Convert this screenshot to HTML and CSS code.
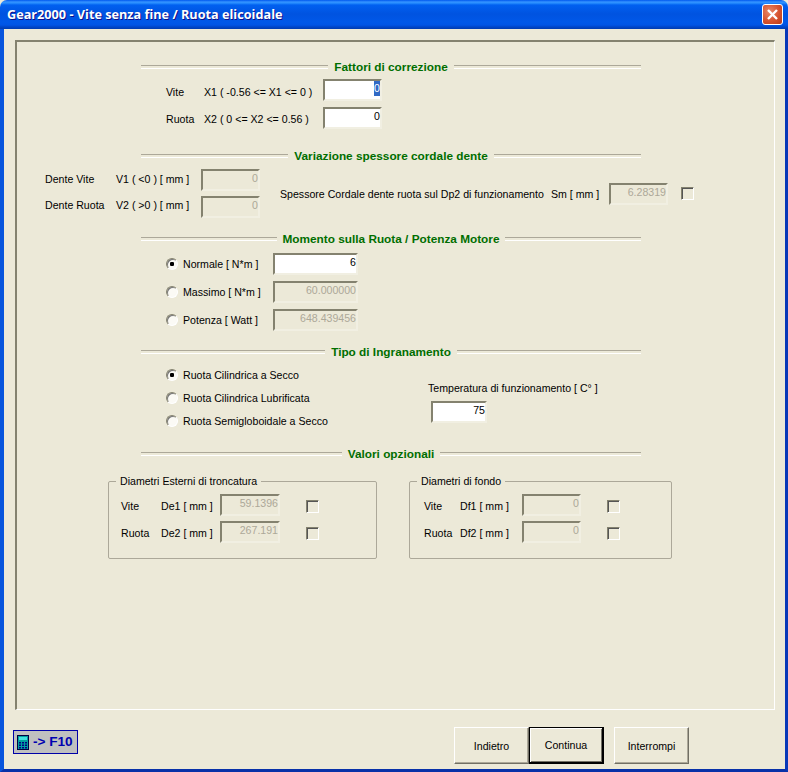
FILE: index.html
```html
<!DOCTYPE html>
<html lang="it">
<head>
<meta charset="utf-8">
<title>Gear2000</title>
<link rel="stylesheet" href="styles.css">
</head>
<body>
<div class="window">
  <header class="titlebar">
    <span class="title">Gear2000 - Vite senza fine / Ruota elicoidale</span>
    <span class="close"><svg width="13" height="13" viewBox="0 0 13 13"><path d="M2 2 L11 11 M11 2 L2 11" stroke="#fff" stroke-width="2.4" fill="none"/></svg></span>
  </header>
  <div class="client">
    <main class="panel">
      <div class="heading"><span>Fattori di correzione</span></div>
      <div class="factor-rows">
        <div class="factor"><span>Vite</span><span>X1 ( -0.56 &lt;= X1 &lt;= 0 )</span><div class="field on"><span class="selected">0</span></div></div>
        <div class="factor"><span>Ruota</span><span>X2 ( 0 &lt;= X2 &lt;= 0.56 )</span><div class="field on">0</div></div>
      </div>

      <div class="heading after-factors"><span>Variazione spessore cordale dente</span></div>
      <div class="thickness">
        <div class="thickness-rows">
          <div class="tooth"><span>Dente Vite</span><span>V1 ( &lt;0 ) [ mm ]</span><div class="field">0</div></div>
          <div class="tooth"><span>Dente Ruota</span><span>V2 ( &gt;0 ) [ mm ]</span><div class="field">0</div></div>
        </div>
        <div class="chordal"><span>Spessore Cordale dente ruota sul Dp2 di funzionamento</span><span>Sm [ mm ]</span><div class="field">6.28319</div><i class="check"></i></div>
      </div>

      <div class="heading after-thickness"><span>Momento sulla Ruota / Potenza Motore</span></div>
      <div class="moment-rows">
        <div class="moment"><i class="radio sel"></i><span>Normale [ N*m ]</span><div class="field on">6</div></div>
        <div class="moment"><i class="radio"></i><span>Massimo [ N*m ]</span><div class="field">60.000000</div></div>
        <div class="moment"><i class="radio"></i><span>Potenza [ Watt ]</span><div class="field">648.439456</div></div>
      </div>

      <div class="heading after-moment"><span>Tipo di Ingranamento</span></div>
      <div class="mesh">
        <div class="mesh-rows">
          <div class="mesh-row"><i class="radio sel"></i><span>Ruota Cilindrica a Secco</span></div>
          <div class="mesh-row"><i class="radio"></i><span>Ruota Cilindrica Lubrificata</span></div>
          <div class="mesh-row"><i class="radio"></i><span>Ruota Semigloboidale a Secco</span></div>
        </div>
        <div class="temperature"><span>Temperatura di funzionamento [ C° ]</span><div class="field on">75</div></div>
      </div>

      <div class="heading after-mesh"><span>Valori opzionali</span></div>
      <div class="groups">
        <fieldset class="group ext">
          <legend>Diametri Esterni di troncatura</legend>
          <div class="diam"><span>Vite</span><span>De1 [ mm ]</span><div class="field">59.1396</div><i class="check"></i></div>
          <div class="diam"><span>Ruota</span><span>De2 [ mm ]</span><div class="field">267.191</div><i class="check"></i></div>
        </fieldset>
        <fieldset class="group root">
          <legend>Diametri di fondo</legend>
          <div class="diam"><span>Vite</span><span>Df1 [ mm ]</span><div class="field">0</div><i class="check"></i></div>
          <div class="diam"><span>Ruota</span><span>Df2 [ mm ]</span><div class="field">0</div><i class="check"></i></div>
        </fieldset>
      </div>
    </main>
    <footer class="footer">
      <div class="f10">
        <svg width="12" height="15" viewBox="0 0 12 15"><rect x="0.5" y="0.5" width="11" height="14" fill="#00a0a0" stroke="#000040"/><rect x="2" y="2" width="8" height="3" fill="#40e0e0"/><path d="M2 7h2v1.500H2zM5 7h2v1.500H5zM8 7h2v1.500H8zM2 9.500h2V11H2zM5 9.500h2V11H5zM8 9.500h2V11H8zM2 12h2v1.500H2zM5 12h2v1.500H5zM8 12h2v1.500H8z" fill="#000080"/></svg>
        <span>-&gt; F10</span>
      </div>
      <button class="btn back">Indietro</button>
      <button class="btn default">Continua</button>
      <button class="btn abort">Interrompi</button>
    </footer>
  </div>
</div>
</body>
</html>
```
FILE: styles.css
```css
* { box-sizing: border-box; }
html, body { margin: 0; padding: 0; background: #ece9d8; }
body { width: 788px; height: 772px; font: 10.6px/14px "Liberation Sans", Arial, sans-serif; color: #000; overflow: hidden; }
i { display: block; }

.window { width: 788px; height: 772px; display: flex; flex-direction: column; }
.titlebar {
  height: 29px; flex: none; display: flex; align-items: center; justify-content: space-between;
  padding: 0 5px 1px 7px; border-radius: 7px 7px 0 0;
  background: linear-gradient(180deg, #0058ee 0, #3593ff 2px, #288eff 3px, #0160f0 5px, #0053e0 14px, #0058e8 22px, #0055e5 25px, #0046c8 27px, #003cb0 29px);
}
.title { font: bold 12.7px/16px "Open Sans", "Liberation Sans", sans-serif; color: #fff; text-shadow: 1px 1px 0 #0f1089; }
.close {
  width: 21px; height: 21px; display: flex; align-items: center; justify-content: center;
  border: 1px solid #fff; border-radius: 3px;
  background: radial-gradient(circle at 35% 35%, #e8896a 0, #d6532f 55%, #b83a18 100%);
}

.client {
  flex: 1; padding-top: 11px; background: #ece9d8;
  border-style: solid; border-width: 0 3px 3px 4px; border-color: #0855dd #0838b8 #0831a8 #0855dd;
}

.panel {
  width: 760px; height: 670px; margin-left: 11px; padding-top: 18px;
  border-style: solid; border-width: 2px 1px 1px 2px; border-color: #84826f #fff #fff #84826f;
}

.heading {
  width: 500px; height: 13px; margin-left: 124px; display: flex; align-items: center; gap: 6px;
  color: #006e00; font-weight: bold; font-size: 11.8px; white-space: nowrap;
}
.heading::before, .heading::after {
  content: ""; flex: 1; height: 2px; border-top: 1px solid #aca899; border-bottom: 1px solid #fff;
}
.after-factors { margin-top: 20px; }
.after-thickness, .after-moment { margin-top: 14px; }
.after-mesh { margin-top: 19px; }

.field {
  height: 22px; text-align: right; color: #aca899; background: #ece9d8;
  border: 2px solid; border-color: #84826f #f1efe2 #f1efe2 #84826f; line-height: 15px;
}
.field.on { color: #000; background: #fff; }
.selected { background: #316ac5; color: #fff; display: inline-block; width: 6px; text-align: center; }

.check {
  width: 13px; height: 13px; background: #ece9d8;
  border: 1px solid; border-color: #84826f #fff #fff #84826f;
  box-shadow: inset 1px 1px 0 #555;
}
.radio {
  width: 12px; height: 12px; border-radius: 50%; background: #fbfaf5;
  border: 1px solid; border-color: #84826f #fff #fff #84826f; box-shadow: inset 1px 1px 0 #777;
}
.radio.sel { background: radial-gradient(circle at 50% 50%, #000 0 2px, #fbfaf5 2.4px); }

.factor-rows { margin: 6px 0 0 149px; display: grid; row-gap: 6px; }
.factor { display: grid; grid-template-columns: 38px 119px 59px; align-items: center; height: 22px; }
.factor > span { padding-top: 4px; }
.factor:last-child > span { padding-top: 2px; }

.thickness { display: flex; align-items: center; margin: 7px 0 0 28px; }
.thickness-rows { display: grid; row-gap: 5px; }
.tooth { display: grid; grid-template-columns: 71px 85px 59px; align-items: center; height: 22px; }
.tooth > span { padding-bottom: 2px; }
.tooth:last-child > span { padding-bottom: 4px; }
.chordal { display: grid; grid-template-columns: 271px 58px 59px 26px; align-items: center; margin-left: 20px; }
.chordal .check { margin-left: 13px; }

.moment-rows { margin: 8px 0 0 149px; display: grid; row-gap: 6px; }
.moment { display: grid; grid-template-columns: 17px 90px 85px; align-items: center; height: 22px; }

.mesh { display: flex; margin: 10px 0 0 149px; }
.mesh-rows { width: 262px; display: grid; row-gap: 9px; }
.mesh-row { display: grid; grid-template-columns: 17px auto; align-items: center; height: 14px; }
.temperature { margin-top: 13px; }
.temperature .field { width: 56px; margin: 6px 0 0 3px; }

.groups { display: flex; gap: 32px; margin: 14px 0 0 91px; }
.group { margin: 0; padding: 6px 0 15px; border: 1px solid #aca899; border-radius: 2px; display: grid; row-gap: 5px; min-width: 0; }
.group legend { margin-left: 7px; padding: 0 4px; }
.group.ext { width: 269px; }
.group.root { width: 263px; }
.diam { display: grid; align-items: center; height: 22px; }
.diam > span { padding-top: 2px; }
.diam .check { margin-top: 2px; }
.ext .diam { padding-left: 12px; grid-template-columns: 40px 59px 60px 40px; }
.ext .check { margin-left: 26px; }
.root .diam { padding-left: 14px; grid-template-columns: 36px 62px 59px 39px; }
.root .check { margin-left: 26px; }

.footer { display: flex; align-items: flex-start; margin-top: 17px; padding-left: 9px; }
.f10 {
  width: 65px; height: 24px; margin-top: 3px; display: flex; align-items: center; gap: 4px; padding-left: 3px;
  background: #c0c0c0; border: 1px solid #0000a8;
  font: bold 13.6px/14px "Liberation Sans", sans-serif; color: #0000b0; white-space: nowrap;
}
.btn {
  width: 75px; height: 37px; padding: 0; font: 10.6px "Liberation Sans", Arial, sans-serif; color: #000; background: #ece9d8;
  border-style: solid; border-width: 1px; border-color: #fff #716f64 #716f64 #fff;
  box-shadow: inset -1px -1px 0 #aca899;
}
.back { margin-left: 376px; }
.default { border-color: #000; border-width: 1px 2px 2px 1px; box-shadow: inset 1px 1px 0 #fff, inset -1px -1px 0 #716f64; }
.abort { margin-left: 10px; }
```
